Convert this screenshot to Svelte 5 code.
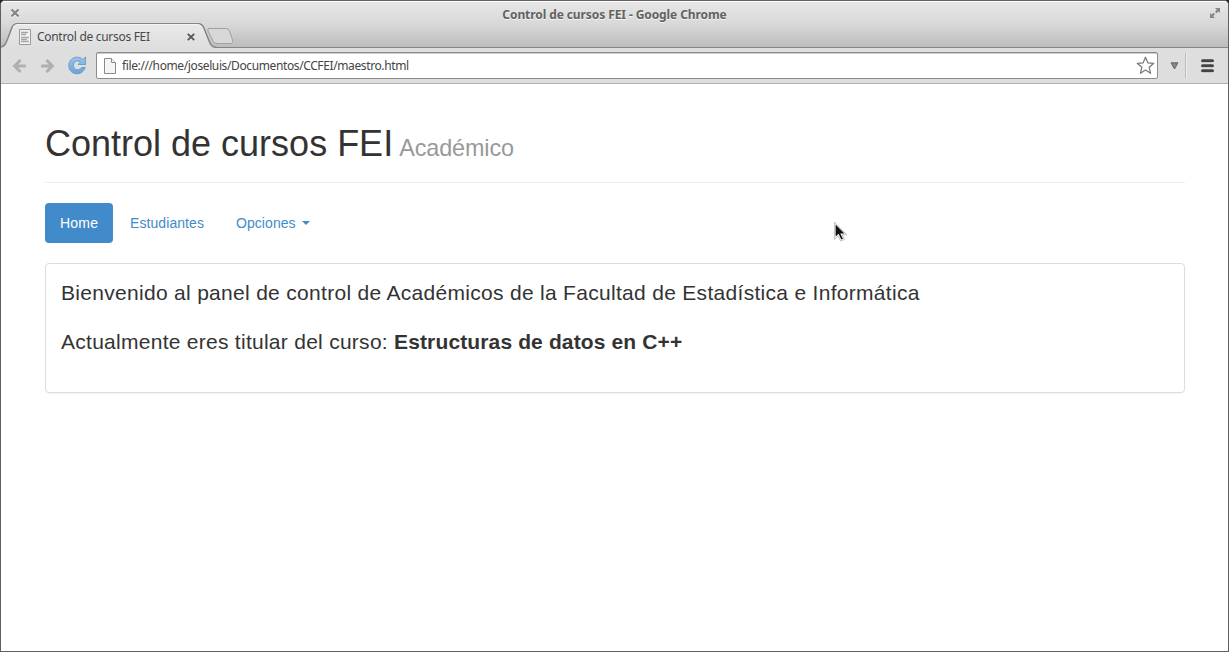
<script lang="ts">
  const tabs = [
    { label: 'Home', active: true, caret: false },
    { label: 'Estudiantes', active: false, caret: false },
    { label: 'Opciones', active: false, caret: true },
  ];
</script>

<div class="window">
  <header class="frame">
    <div class="titlebar">
      <svg class="win-close" width="10" height="10" viewBox="0 0 10 10"><path d="M1.500 1.500 8.500 8.500M8.500 1.500 1.500 8.500" stroke="#fff" stroke-width="2" transform="translate(0 1)" /><path d="M1.500 1.500 8.500 8.500M8.500 1.500 1.500 8.500" stroke="#858585" stroke-width="2.200" /></svg>
      <div class="window-title"><span>Control de cursos FEI - Google Chrome</span></div>
      <svg class="win-max" width="12" height="12" viewBox="0 0 12 12"><path d="M6 1h5v5L9.4 4.4 7.5 6.2 6 4.7 7.8 2.8zM1 6l1.6 1.6L4.4 5.8 5.9 7.3 4.2 9.2 6 11H1z" fill="#888" /></svg>
    </div>
    <div class="tabstrip">
      <svg class="tab-shape" width="240" height="25" viewBox="0 0 240 25">
        <defs><linearGradient id="tabfill" x1="0" y1="0" x2="0" y2="1"><stop offset="0" stop-color="#e9e9e9" /><stop offset="1" stop-color="#dedede" /></linearGradient></defs>
        <path d="M0 25V24C4 24 5 20 7 15L10.500 6Q12.500 .5 17 .5H196Q201 .5 203 5L208.500 19Q210.500 24.500 216 24.500V25z" fill="url(#tabfill)" />
        <path d="M0 24C4 23 5 20 7 15L10.500 5.500Q12.500 .5 17 .5H196Q201 .5 203 5L208.500 19Q210.500 24.500 216 24.500" fill="none" stroke="#858585" stroke-width="1.500" />
        <path d="M12 4Q14 1.500 17 1.500H196Q199.500 1.500 201 4" fill="none" stroke="#f4f4f4" />
        <path d="M207.500 5.500H225Q227.500 5.500 228.500 8L231.500 17Q232.500 20.500 229 20.500H216Q213 20.500 212 18L207 8Q206 5.500 208.500 5.500z" fill="#d8d8d8" stroke="#a1a1a1" />
      </svg>
      <div class="tab">
        <svg width="12" height="16" viewBox="0 0 12 16"><path d="M.5.5h11v15H.5z" fill="#f2f2f2" stroke="#999" /><path d="M2 3.500h7M2 5.500h5M2 8.500h8M2 10.500h6M2 12.500h8" stroke="#a7a7a7" stroke-width="1.500" /></svg>
        <span class="tab-title">Control de cursos FEI</span>
        <svg class="tab-close" width="8" height="8" viewBox="0 0 8 8"><path d="m.8.8 6.400 6.400M7.200.8.8 7.200" stroke="#555" stroke-width="1.800" /></svg>
      </div>
    </div>
  </header>

  <div class="toolbar">
    <svg class="back" width="14" height="14" viewBox="0 0 14 14"><path d="M7.500 2 2.700 7l4.800 5M3 7h9.500" fill="none" stroke="#b0b0b0" stroke-width="3.200" stroke-linecap="round" /></svg>
    <svg class="forward" width="14" height="14" viewBox="0 0 14 14"><path d="m6.500 2 4.800 5-4.800 5M11 7H1.500" fill="none" stroke="#b0b0b0" stroke-width="3.200" stroke-linecap="round" /></svg>
    <svg class="reload" width="19" height="19" viewBox="0 0 19 19">
      <defs><linearGradient id="blue" x1="0" y1="0" x2="0" y2="1"><stop offset="0" stop-color="#9cc4ea" /><stop offset="1" stop-color="#6da2d8" /></linearGradient></defs>
      <path d="M17.500 1v7.500H10L12.600 6C9 3.600 5.500 5.500 5.500 9.500c0 4.500 5.500 6 8 2h3.700C15.500 16 12.500 17.800 9 17.800 4 17.800.8 14 .8 9.500.8 4.800 4.500 1.200 9 1.200c2.400 0 4.300.8 5.900 2.400z" fill="url(#blue)" stroke="#6798c9" stroke-width=".9" />
    </svg>
    <div class="address">
      <svg class="page-icon" width="12" height="16" viewBox="0 0 12 16"><path d="M.5.5h7l4 4v11H.5z" fill="#f5f5f5" stroke="#8a8a8a" /><path d="M7.500.5v4h4" fill="#fff" stroke="#8a8a8a" /></svg>
      <span class="url">file:///home/joseluis/Documentos/CCFEI/maestro.html</span>
      <svg class="star" width="19" height="19" viewBox="0 0 19 19"><path d="m9.500 1.200 2.300 5.600 6 .5-4.600 4 1.400 6-5.100-3.200-5.100 3.200 1.400-6-4.600-4 6-.5z" fill="#fff" stroke="#777" stroke-width="1.200" stroke-linejoin="round" /></svg>
    </div>
    <svg class="down" width="9" height="8" viewBox="0 0 9 8"><path d="M1 .8h7L4.500 7z" fill="#858585" stroke="#686868" /></svg>
    <div class="separator"></div>
    <svg class="menu" width="13" height="14" viewBox="0 0 13 14"><path d="M1.500 2.500h10M1.500 7.500h10M1.500 12.500h10" stroke="#f2f2f2" stroke-width="3" stroke-linecap="round" /><path d="M1.500 1.700h10M1.500 6.700h10M1.500 11.700h10" stroke="#444" stroke-width="3" stroke-linecap="round" /></svg>
  </div>

  <main>
    <div class="page-header"><h1>Control de cursos FEI <small>Académico</small></h1></div>
    <nav>
      {#each tabs as tab}
        <a href="#top" class:active={tab.active}>{tab.label}{#if tab.caret}<b class="caret"></b>{/if}</a>
      {/each}
    </nav>
    <section class="panel">
      <p class="welcome">Bienvenido al panel de control de Académicos de la Facultad de Estadística e Informática</p>
      <p>Actualmente eres titular del curso: <strong>Estructuras de datos en C++</strong></p>
    </section>
  </main>

  <svg class="cursor" width="13" height="20" viewBox="0 0 13 20"><path d="M1 1v15l3.400-3.200L7 18.300l2.700-1.200-2.500-5h4.600z" fill="#111" stroke="#fff" stroke-width="1.200" /><path d="M.4 0v17.300l3.800-3.600 2.500 5.400 3.800-1.700-2.300-4.700h4.500z" fill="none" stroke="#999" stroke-width=".6" /></svg>
</div>

<style>
  :global(body) { margin: 0; background: #222; }
  * { box-sizing: border-box; }
  svg { display: block; flex: none; }
  .window { position: relative; height: 652px; overflow: hidden; background: #fff; border: 1px solid #5f5f5f; border-top-color: #666062; border-radius: 5px 5px 0 0; font-family: "Liberation Sans", Arial, sans-serif; }
  .frame { height: 47px; background: linear-gradient(#e7e7e7, #d8d8d8 50%, #bcbcbc); border-top: 1px solid #fff; border-bottom: 1px solid #858585; }
  .titlebar { height: 21px; display: flex; align-items: flex-start; padding: 0 7px 0 9px; }
  .win-close { margin-top: 6px; }
  .win-max { margin-top: 5px; }
  .window-title { flex: 1; text-align: center; padding-top: 4px; font: bold 12px/17px "Noto Sans", sans-serif; color: #626262; text-shadow: 0 1px #f5f5f5; white-space: nowrap; }
  .window-title span { display: inline-block; letter-spacing: -.09px; }
  .tabstrip { height: 25px; display: grid; }
  .tab-shape, .tab { grid-area: 1 / 1; }
  .tab { width: 208px; height: 25px; display: flex; align-items: flex-start; padding: 6px 0 0 18px; }
  .tab-title { margin: -1px 0 0 6px; width: 150px; font: 12px/17px "Noto Sans", sans-serif; letter-spacing: -.3px; color: #484848; white-space: nowrap; }
  .tab-close { margin-top: 4px; }
  .toolbar { height: 36px; display: flex; align-items: center; padding: 0 13px 0 11px; background: #dedede; border-bottom: 1px solid #b1b1b1; }
  .forward { margin-left: 15px; }
  .reload { margin-left: 13px; }
  .address { flex: none; width: 1062px; height: 27px; display: flex; align-items: center; margin-left: 9px; padding: 0 2px 0 7px; background: #fff; border: 1px solid #8c8c8c; border-radius: 2px; box-shadow: inset 0 1px #ccc; }
  .url { flex: 1; margin-left: 6px; font: 12px/17px "Noto Sans", sans-serif; letter-spacing: -.385px; color: #444; white-space: nowrap; }
  .down { margin-left: 12px; }
  .separator { width: 2px; height: 25px; margin-left: 6px; background: linear-gradient(90deg, #bbb 50%, #eee 50%); }
  .menu { margin-left: 14px; }
  main { width: 1140px; margin-left: 44px; padding-top: 40px; color: #333; }
  .page-header { padding-bottom: 9px; border-bottom: 1px solid #eee; margin-bottom: 20px; }
  h1 { margin: 0 0 10px; height: 39px; font-size: 36px; line-height: 39.6px; font-weight: normal; }
  small { color: #999; font-size: 23.4px; line-height: 1; }
  h1 small { margin-left: -4px; letter-spacing: -.1px; }
  nav { display: flex; gap: 2px; }
  a { display: flex; align-items: center; padding: 10px 15px; font-size: 14px; line-height: 20px; letter-spacing: .07px; color: #428bca; text-decoration: none; border-radius: 4px; }
  .active { padding-right: 14.900px; letter-spacing: .2px; background: #428bca; color: #fff; }
  .caret { margin-left: 6px; border: 4px solid transparent; border-top-color: currentColor; border-bottom: 0; }
  .panel { height: 130px; margin-top: 20px; padding: 14px 15px; border: 1px solid #ddd; border-radius: 4px; box-shadow: 0 1px 1px rgba(0, 0, 0, .05); }
  p { margin: 0 0 20px; font-size: 21px; line-height: 29px; letter-spacing: .27px; }
  .welcome { letter-spacing: .3px; }
  strong { letter-spacing: .13px; }
  .cursor { position: absolute; left: 833px; top: 221px; }
</style>
